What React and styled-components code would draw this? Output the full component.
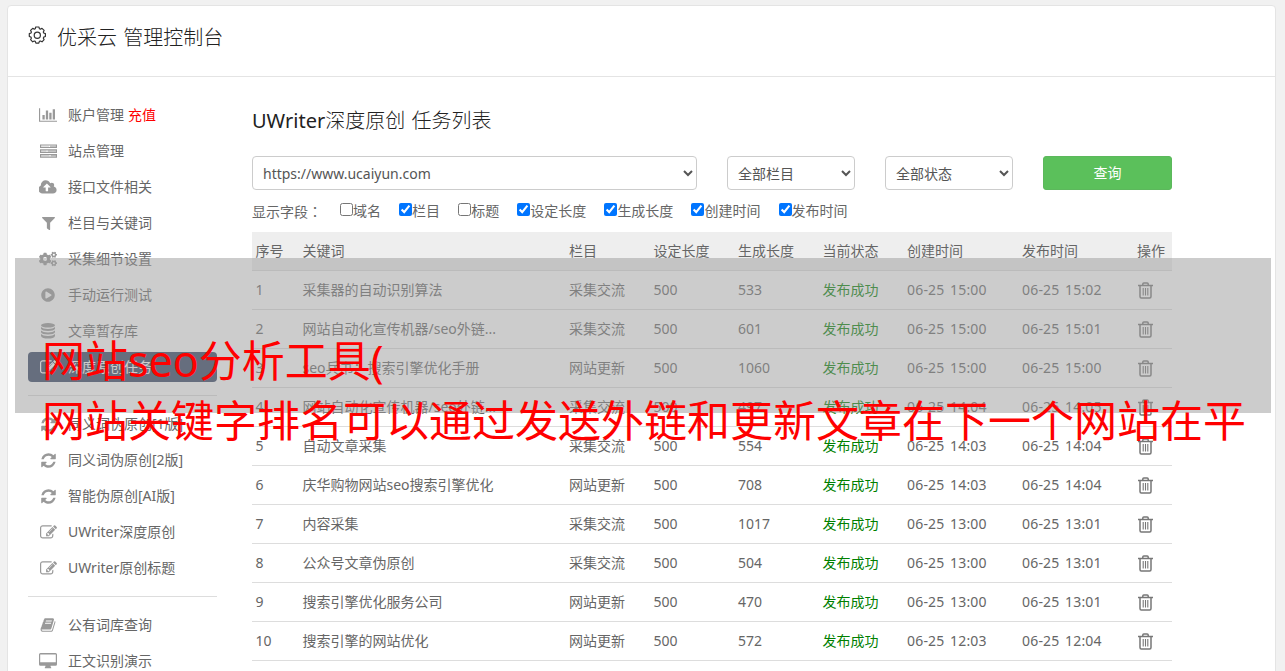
import React, { useState } from 'react';
import styled, { createGlobalStyle } from 'styled-components';
import { FaFilter, FaCogs, FaPlayCircle } from 'react-icons/fa';

const GlobalStyle = createGlobalStyle`
  * {
    box-sizing: border-box;
  }
  html, body {
    height: 100%;
    margin: 0;
    overflow: hidden;
  }
  body {
    background-color: #f1f1f1;
    color: #666;
    font-family: 'Noto Sans', 'Noto Sans CJK SC', sans-serif;
    font-size: 14px;
    line-height: 20px;
  }
`;

const Page = styled.div`
  height: 100vh;
  padding: 5px 9px 0 7px;
  overflow: hidden;
`;

const Panel = styled.div`
  height: 900px;
  background-color: #fff;
  border: 1px solid #e4e4e4;
  border-radius: 4px;
`;

const Header = styled.header`
  display: flex;
  align-items: flex-start;
  height: 71px;
  padding: 20px 20px 0;
  border-bottom: 1px solid #e4e4e4;
  color: #333;
`;

const HeaderTitle = styled.h1`
  margin: 1px 0 0 11px;
  font-size: 20px;
  font-weight: 300;
  line-height: 22px;
  word-spacing: 1px;
  color: #222;
`;

const Columns = styled.div`
  display: flex;
  padding: 23px 0 0 20px;
`;

const Sidebar = styled.nav`
  width: 189px;
  margin-right: 35px;
  flex: none;
`;

const MenuItem = styled.a`
  display: flex;
  align-items: center;
  height: 30px;
  margin-bottom: ${(p) => (p.$last ? 0 : 6)}px;
  border-radius: 4px;
  white-space: nowrap;
  cursor: pointer;
  color: ${(p) => (p.$active ? '#fff' : '#666')};
  background-color: ${(p) => (p.$active ? '#334362' : 'transparent')};

  svg {
    color: ${(p) => (p.$active ? '#fff' : '#999')};
  }
`;

const MenuIcon = styled.span`
  display: flex;
  align-items: center;
  justify-content: center;
  width: 40px;
`;

const Recharge = styled.span`
  margin-left: 4px;
  color: red;
`;

const Divider = styled.hr`
  height: 1px;
  margin: 13px 0;
  border: 0;
  background-color: #ddd;
`;

const Main = styled.main`
  width: 920px;
  flex: none;
`;

const Title = styled.h2`
  margin: 9px 0 0;
  font-size: 20px;
  font-weight: 300;
  line-height: 24px;
  word-spacing: 1px;
  color: #222;
`;

const Latin = styled.span`
  font-weight: 400;
`;

const Filters = styled.div`
  display: flex;
  gap: 30px;
  margin-top: 23px;
`;

const Select = styled.select`
  width: ${(p) => p.$width}px;
  height: 34px;
  padding: 6px;
  border: 1px solid #ccc;
  border-radius: 4px;
  background-color: #fff;
  color: #555;
  font: inherit;
`;

const SearchButton = styled.button`
  flex: 1;
  height: 34px;
  border: 1px solid #5cb85c;
  border-radius: 3px;
  background-color: #5bc05b;
  color: #fff;
  font: inherit;
`;

const Fields = styled.div`
  display: flex;
  align-items: center;
  height: 42px;
`;

const FieldsLabel = styled.span`
  width: 88px;
`;

const Colon = styled.span`
  font-family: 'Noto Sans CJK TC', sans-serif;
`;

const Field = styled.label`
  display: flex;
  align-items: center;
  margin-right: 18.1px;
`;

const Checkbox = styled.input`
  width: 13px;
  height: 13px;
  margin: 0 0 3px;
`;

const Row = styled.div`
  display: grid;
  grid-template-columns: 47px 266.5px 84.5px 84.5px 84.5px 84.5px 115px 115px 1fr;
  align-items: center;
  height: 39px;
  border-bottom: 1px solid #ddd;
  background-color: ${(p) => (p.$head ? '#eee' : '#fff')};
`;

const Cell = styled.div`
  padding-left: 3.5px;
  white-space: nowrap;
  color: ${(p) => (p.$success ? 'green' : 'inherit')};
`;

const DateCell = styled(Cell)`
  letter-spacing: 0.2px;
  word-spacing: 1.6px;
`;

const TrashCell = styled(Cell)`
  display: flex;
  padding-left: 4px;
`;

// 横幅浮层
const Banner = styled.div`
  position: absolute;
  left: 15px;
  top: 258px;
  width: 1256px;
  height: 155px;
  padding: 73px 0 0 27px;
  background-color: rgba(153, 153, 153, 0.5);
  color: red;
  font-family: 'Noto Sans', 'Noto Sans CJK SC', sans-serif;
  font-size: 43px;
  line-height: 60px;
  white-space: nowrap;
`;

function Glyph({ width = 1792, size = 17, d }) {
  return (
    <svg width={(size * width) / 1792} height={size} viewBox={`0 0 ${width} 1792`} fill="currentColor">
      <path d={d} />
    </svg>
  );
}

const ChartIcon = () => (
  <Glyph
    width={2048}
    size={16}
    d="M640 896v512h-256v-512h256zm384-512v1024h-256v-1024h256zm1024 1152v128h-2048v-1536h128v1408h1920zm-640-896v768h-256v-768h256zm384-384v1152h-256v-1152h256z"
  />
);

const UploadIcon = () => (
  <Glyph
    width={1920}
    d="M1216 864q0-14-9-23l-352-352q-9-9-23-9t-23 9l-351 351q-10 12-10 24 0 14 9 23t23 9h224v352q0 13 9.5 22.5t22.5 9.5h192q13 0 22.5-9.5t9.5-22.5v-352h224q13 0 22.5-9.5t9.5-22.5zm640 288q0 159-112.5 271.5t-271.5 112.5h-1088q-185 0-316.5-131.5t-131.5-316.5q0-130 70-240t188-165q-2-30-2-43 0-212 150-362t362-150q156 0 285.5 87t188.5 231q71-62 166-62 106 0 181 75t75 181q0 76-41 138 130 31 213.5 135.5t83.5 238.5z"
  />
);

const RefreshIcon = () => (
  <Glyph
    d="M1639 1056q0 5-1 7-64 268-268 434.5t-478 166.5q-146 0-282.5-55t-243.5-157l-129 129q-19 19-45 19t-45-19-19-45v-448q0-26 19-45t45-19h448q26 0 45 19t19 45-19 45l-137 137q71 66 161 102t187 36q134 0 250-65t186-179q11-17 53-117 8-23 30-23h192q13 0 22.5 9.5t9.5 22.5zm25-800v448q0 26-19 45t-45 19h-448q-26 0-45-19t-19-45 19-45l138-138q-148-137-349-137-134 0-250 65t-186 179q-11 17-53 117-8 23-30 23h-199q-13 0-22.5-9.5t-9.5-22.5v-7q65-268 270-434.5t480-166.5q146 0 284 55.5t245 156.5l130-129q19-19 45-19t45 19 19 45z"
  />
);

const EditIcon = () => (
  <Glyph
    d="M888 1184l116-116-152-152-116 116v56h96v96h56zm440-720q-16-16-33 1l-350 350q-17 17-1 33t33-1l350-350q17-17 1-33zm80 594v190q0 119-84.5 203.5t-203.5 84.5h-832q-119 0-203.5-84.5t-84.5-203.5v-832q0-119 84.5-203.5t203.5-84.5h832q63 0 117 25 15 7 18 23 3 17-9 29l-49 49q-14 14-32 8-23-6-45-6h-832q-66 0-113 47t-47 113v832q0 66 47 113t113 47h832q66 0 113-47t47-113v-126q0-13 9-22l64-64q15-15 35-7t20 29zm-96-738l288 288-672 672h-288v-288zm444 132l-92 92-288-288 92-92q28-28 68-28t68 28l152 152q28 28 28 68t-28 68z"
  />
);

const BookIcon = () => (
  <Glyph
    size={16}
    d="M1703 478q40 57 18 129l-275 906q-19 64-76.5 107.5t-122.5 43.5h-923q-77 0-148.5-53.5t-99.5-131.5q-24-67-2-127 0-4 3-27t4-37q1-8-3-21.5t-3-19.5q2-11 8-21t16.5-23.5 16.5-23.5q23-38 45-91.5t30-91.5q3-10 .5-30t-.5-28q3-11 17-28t17-23q21-36 42-92t25-90q1-9-2.5-32t.5-28q4-13 22-30.5t22-22.5q19-26 42.5-84.5t27.5-96.5q1-8-3-25.5t-2-26.5q2-8 9-18t18-23 17-21q8-12 16.5-30.5t15-35 16-36 19.5-32 26.5-23.5 36-11.5 47.5 5.5l-1 3q38-9 51-9h761q74 0 114 56t18 130l-274 906q-36 119-71.5 153.5t-128.5 34.5h-869q-27 0-38 15-11 16-1 43 24 70 144 70h923q29 0 56-15.5t35-41.5l300-987q7-22 5-57 38 15 59 43zm-1064 2q-4 13 2 22.5t20 9.5h608q13 0 25.5-9.5t16.5-22.5l21-64q4-13-2-22.5t-20-9.5h-608q-13 0-25.5 9.5t-16.5 22.5zm-83 256q-4 13 2 22.5t20 9.5h608q13 0 25.5-9.5t16.5-22.5l21-64q4-13-2-22.5t-20-9.5h-608q-13 0-25.5 9.5t-16.5 22.5z"
  />
);

const ServerIcon = () => (
  <svg width="17" height="14" viewBox="0 0 17 14" fill="none" stroke="currentColor">
    <path d="M.5 1h16v2.500H.5zM.5 5.800h16v2.500H.5zM.5 10.600h16v2.500H.5z" strokeWidth="1.200" />
    <path d="M1 2.200h8M1 7h5M1 11.800h8" strokeOpacity=".4" />
    <path d="M10 2.200h6M8 7h8M11 11.800h5" strokeOpacity=".85" />
  </svg>
);

const DatabaseIcon = () => (
  <svg width="14" height="16" viewBox="0 0 14 16" fill="currentColor">
    <ellipse cx="7" cy="2.300" rx="7" ry="2.300" />
    <path d="M0 4q2 1.900 7 1.900T14 4v1.800q-1 2.200-7 2.200T0 5.800zM0 7.500q2 1.900 7 1.900T14 7.500v1.800q-1 2.200-7 2.200T0 9.300zM0 11q2 1.900 7 1.900T14 11v2q-1 2.600-7 2.600T0 13z" />
  </svg>
);

const DesktopIcon = () => (
  <svg width="18" height="16" viewBox="0 0 18 16" fill="currentColor">
    <path
      fillRule="evenodd"
      d="M1.500 0h15Q18 0 18 1.500v9.700q0 1.500-1.500 1.500H11.500q0 1 .7 1.700v.8H5.800v-.8q.7-.7.7-1.700H1.500Q0 12.700 0 11.200V1.500Q0 0 1.500 0zM1.200 1.500v7.800h15.600V1.500z"
    />
  </svg>
);

const GearIcon = () => (
  <svg width="18" height="18" viewBox="0 0 18 18" fill="none" stroke="currentColor" strokeWidth="1.200" strokeLinejoin="round">
    <path d="M7.700 1h3.200l.5 1.700 1 .4 1.600-.8 2.100 2.100-.8 1.600.4 1 1.700.6v2.900l-1.700.6-.4 1 .8 1.600-2.100 2.100-1.600-.8-1 .4-.6 1.700H7.900l-.6-1.700-1-.4-1.600.8-2.100-2.100.8-1.600-.4-1-1.700-.6V7.600L3 7l.4-1-.8-1.600 2.100-2.100 1.600.8 1-.4z" />
    <circle cx="9.300" cy="9.200" r="3.100" />
  </svg>
);

const TrashIcon = () => (
  <svg width="15" height="17" viewBox="0 0 15 17" fill="none" stroke="#777" strokeWidth="1.500">
    <path d="M0 3.500h15M4.800 3.500V2q0-1.100 1-1.100h3.400q1 0 1 1.100v1.500M2 3.500v11q0 1.500 1.300 1.500h8.400q1.300 0 1.300-1.500v-11" />
    <path d="M5.200 6v7.500M7.500 6v7.500M9.800 6v7.500" strokeWidth="1.100" />
  </svg>
);

const menuGroups = [
  [
    { title: '账户管理', icon: <ChartIcon />, extra: '充值' },
    { title: '站点管理', icon: <ServerIcon /> },
    { title: '接口文件相关', icon: <UploadIcon /> },
    { title: '栏目与关键词', icon: <FaFilter size={13} /> },
    { title: '采集细节设置', icon: <FaCogs size={18} /> },
    { title: '手动运行测试', icon: <FaPlayCircle size={14} /> },
    { title: '文章暂存库', icon: <DatabaseIcon /> },
    { title: '深度原创任务', icon: <EditIcon />, active: true },
  ],
  [
    { title: '同义词伪原创[1版]', icon: <RefreshIcon /> },
    { title: '同义词伪原创[2版]', icon: <RefreshIcon /> },
    { title: '智能伪原创[AI版]', icon: <RefreshIcon /> },
    { title: 'UWriter深度原创', icon: <EditIcon /> },
    { title: 'UWriter原创标题', icon: <EditIcon /> },
  ],
  [
    { title: '公有词库查询', icon: <BookIcon /> },
    { title: '正文识别演示', icon: <DesktopIcon /> },
  ],
];

const fieldNames = ['域名', '栏目', '标题', '设定长度', '生成长度', '创建时间', '发布时间'];

const headers = ['序号', '关键词', '栏目', '设定长度', '生成长度', '当前状态', '创建时间', '发布时间', '操作'];

const tasks = [
  ['采集器的自动识别算法', '采集交流', 533, '06-25 15:00', '06-25 15:02'],
  ['网站自动化宣传机器/seo外链...', '采集交流', 601, '06-25 15:00', '06-25 15:01'],
  ['seo兵书：搜索引擎优化手册', '网站更新', 1060, '06-25 15:00', '06-25 15:00'],
  ['网站自动化宣传机器/seo外链...', '采集交流', 497, '06-25 14:04', '06-25 14:05'],
  ['自动文章采集', '采集交流', 554, '06-25 14:03', '06-25 14:04'],
  ['庆华购物网站seo搜索引擎优化', '网站更新', 708, '06-25 14:03', '06-25 14:04'],
  ['内容采集', '采集交流', 1017, '06-25 13:00', '06-25 13:01'],
  ['公众号文章伪原创', '采集交流', 504, '06-25 13:00', '06-25 13:01'],
  ['搜索引擎优化服务公司', '网站更新', 470, '06-25 13:00', '06-25 13:01'],
  ['搜索引擎的网站优化', '网站更新', 572, '06-25 12:03', '06-25 12:04'],
];

export default function App() {
  const [checked, setChecked] = useState([false, true, false, true, true, true, true]);
  const toggleField = (index) => {
    setChecked((prev) => prev.map((v, i) => (i === index ? !v : v)));
  };

  return (
    <Page>
      <GlobalStyle />
      <Panel>
        <Header>
          <GearIcon />
          <HeaderTitle>优采云 管理控制台</HeaderTitle>
        </Header>
        <Columns>
          <Sidebar>
            {menuGroups.map((group, g) => (
              <React.Fragment key={g}>
                {g > 0 && <Divider />}
                {group.map((item, i) => (
                  <MenuItem key={item.title} $active={item.active} $last={i === group.length - 1}>
                    <MenuIcon>{item.icon}</MenuIcon>
                    {item.title}
                    {item.extra && <Recharge>{item.extra}</Recharge>}
                  </MenuItem>
                ))}
              </React.Fragment>
            ))}
          </Sidebar>
          <Main>
            <Title>
              <Latin>UWriter</Latin>深度原创 任务列表
            </Title>
            <Filters>
              <Select $width={445}>
                <option>https://www.ucaiyun.com</option>
              </Select>
              <Select $width={128}>
                <option>全部栏目</option>
              </Select>
              <Select $width={128}>
                <option>全部状态</option>
              </Select>
              <SearchButton>查询</SearchButton>
            </Filters>
            <Fields>
              <FieldsLabel>
                显示字段<Colon>：</Colon>
              </FieldsLabel>
              {fieldNames.map((name, i) => (
                <Field key={name}>
                  <Checkbox type="checkbox" checked={checked[i]} onChange={() => toggleField(i)} />
                  {name}
                </Field>
              ))}
            </Fields>
            <Row $head>
              {headers.map((name) => (
                <Cell key={name}>{name}</Cell>
              ))}
            </Row>
            {tasks.map(([keyword, column, length, created, published], i) => (
              <Row key={i}>
                <Cell>{i + 1}</Cell>
                <Cell>{keyword}</Cell>
                <Cell>{column}</Cell>
                <Cell>500</Cell>
                <Cell>{length}</Cell>
                <Cell $success>发布成功</Cell>
                <DateCell>{created}</DateCell>
                <DateCell>{published}</DateCell>
                <TrashCell>
                  <TrashIcon />
                </TrashCell>
              </Row>
            ))}
          </Main>
        </Columns>
      </Panel>
      <Banner>
        网站seo分析工具(
        <br />
        网站关键字排名可以通过发送外链和更新文章在下一个网站在平
      </Banner>
    </Page>
  );
}
